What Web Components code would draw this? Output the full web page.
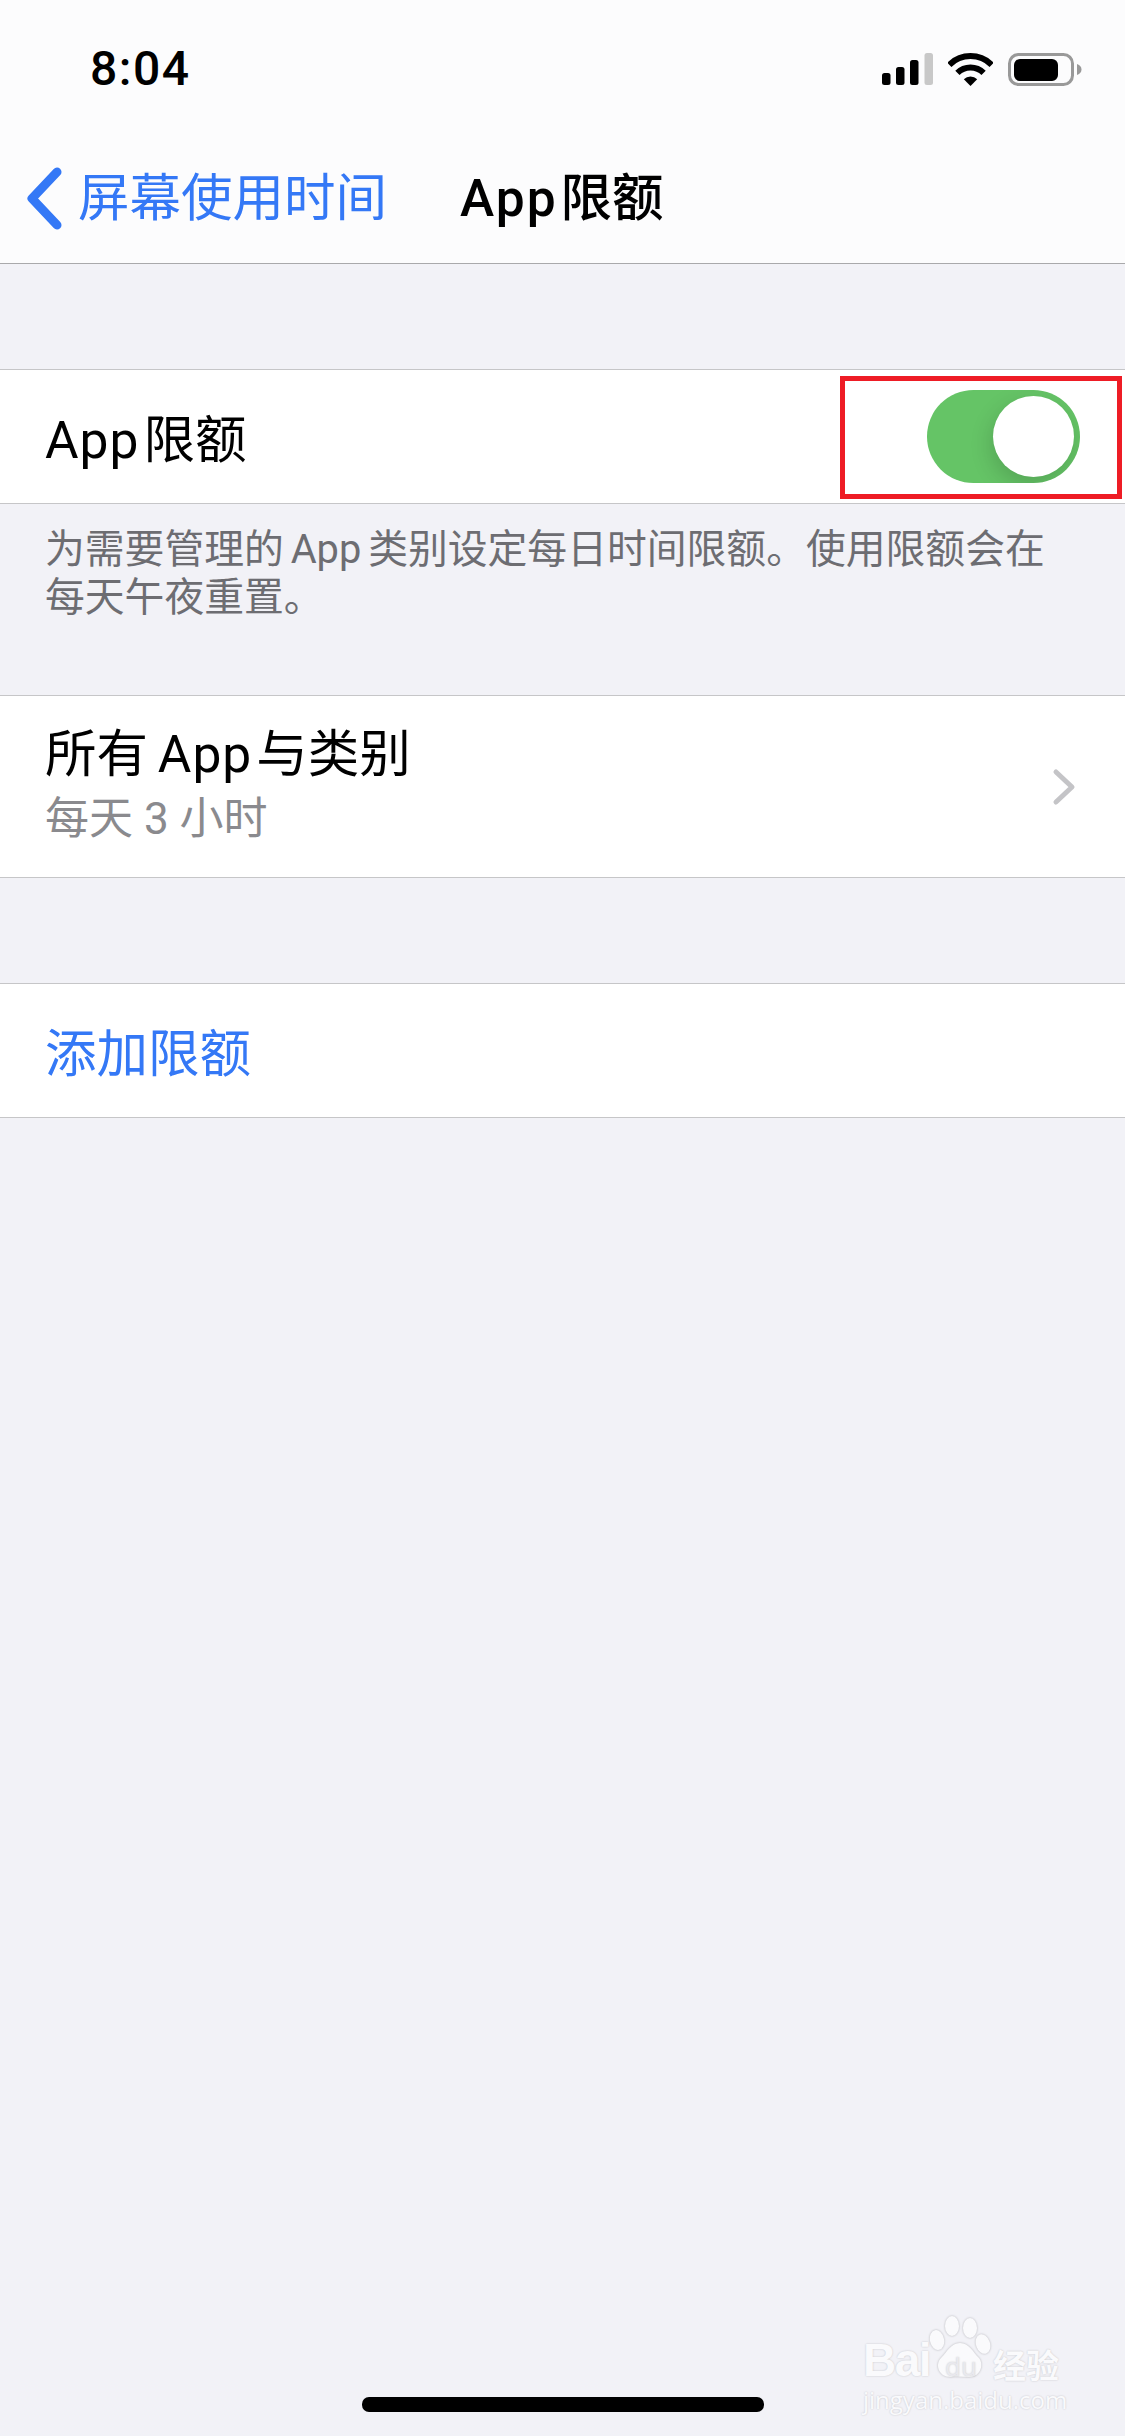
<!DOCTYPE html>
<html lang="zh">
<head>
<meta charset="utf-8">
<title>App限额</title>
<style>
  html, body { margin: 0; padding: 0; }
  body {
    background: #f2f2f7;
    font-family: Roboto, "Noto Sans CJK SC", sans-serif;
  }
  .latin { letter-spacing: 1px; margin-right: 4px; }
</style>
</head>
<body>
<app-screen>
  <nav-header back="屏幕使用时间" time="8:04"></nav-header>
  <settings-group style="margin-top:105px">
    <settings-row marked>
      <span class="latin">App</span>限额
      <toggle-switch slot="end"></toggle-switch>
    </settings-row>
  </settings-group>
  <footer-note>为需要管理的 App 类别设定每日时间限额。使用限额会在每天午夜重置。</footer-note>
  <settings-group>
    <settings-row tall sub="每天 3 小时" chevron>所有 <span class="latin">App</span>与类别</settings-row>
  </settings-group>
  <settings-group style="margin-top:105px">
    <settings-row link>添加限额</settings-row>
  </settings-group>
  <home-indicator></home-indicator>
  <baidu-mark></baidu-mark>
</app-screen>

<script>
const define = (name, css, html) => {
  customElements.define(name, class extends HTMLElement {
    constructor() {
      super();
      this.attachShadow({ mode: 'open' });
    }
    connectedCallback() {
      const body = typeof html === 'function' ? html(this) : html;
      this.shadowRoot.innerHTML = `<style>${css}</style>${body}`;
    }
  });
};

define('app-screen', `
  :host { display: flex; flex-direction: column; position: relative; width: 1125px; height: 2436px; overflow: hidden; background: #f2f2f7; }
`, `<slot></slot>`);

define('nav-header', `
  :host { display: block; background: #fcfcfd; border-bottom: 1px solid #a9a9ab; color: #000; }
  .status { height: 138px; box-sizing: border-box; padding: 0 43px 0 90px; display: flex; align-items: center; justify-content: space-between; }
  .time { font: 500 48px/1 Roboto, sans-serif; letter-spacing: 1.5px; }
  .icons { display: flex; align-items: center; gap: 15px; }
  svg { display: block; }
  .nav { height: 125px; box-sizing: border-box; padding: 0 0 4px 27px; display: flex; align-items: center; gap: 73px; }
  .back { display: flex; align-items: center; gap: 16px; color: #3478f6; font-size: 51.5px; line-height: 60px; white-space: nowrap; }
  .title { font-size: 51.5px; line-height: 60px; font-weight: 500; white-space: nowrap; }
  .title span { letter-spacing: 2px; margin-right: 3px; }
`, el => `
  <div class="status">
    <span class="time">${el.getAttribute('time')}</span>
    <div class="icons">
      <svg width="51" height="32" viewBox="0 0 51 32">
        <rect x="0" y="20" width="8.5" height="12" rx="2.5"/>
        <rect x="14" y="14" width="8.5" height="18" rx="2.5"/>
        <rect x="28" y="7" width="8.5" height="25" rx="2.5"/>
        <rect x="42.5" y="0" width="8.5" height="32" rx="2.5" fill="#c8c8c8"/>
      </svg>
      <svg width="45" height="33" viewBox="0 0 45 33" fill="none" stroke="#000" stroke-width="6">
        <path d="M1.3 11.8A30 30 0 0 1 43.7 11.8"/>
        <path d="M9.4 19.9A18.5 18.5 0 0 1 35.6 19.9"/>
        <path d="M22.5 33L15.8 26.3A9.5 9.5 0 0 1 29.2 26.3Z" fill="#000" stroke="none"/>
      </svg>
      <svg width="74" height="33" viewBox="0 0 74 33">
        <rect x="1.5" y="1.5" width="63" height="30" rx="9" fill="none" stroke="#999" stroke-width="3"/>
        <rect x="6" y="6" width="44" height="22" rx="6"/>
        <path d="M69 11C72 12 73.5 14 73.5 16.5S72 21 69 22Z" fill="#999"/>
      </svg>
    </div>
  </div>
  <div class="nav">
    <div class="back">
      <svg width="35" height="63" viewBox="0 0 35 63" fill="none" stroke="#3478f6" stroke-width="9" stroke-linecap="round" stroke-linejoin="round">
        <path d="M30 5L5 31.5L30 58"/>
      </svg>
      <span>${el.getAttribute('back')}</span>
    </div>
    <div class="title"><span>App</span>限额</div>
  </div>
`);

define('settings-group', `
  :host { display: block; background: #fff; border-top: 1px solid #c6c6c8; border-bottom: 1px solid #c6c6c8; }
`, `<slot></slot>`);

define('settings-row', `
  :host { display: flex; align-items: center; justify-content: space-between; position: relative; box-sizing: border-box; height: 133px; padding: 0 45px; font-size: 51.5px; color: #000; }
  :host([tall]) { height: 181px; padding-right: 49px; }
  :host([link]) { color: #3478f6; }
  .text { display: flex; flex-direction: column; gap: 8px; padding-top: 8px; white-space: nowrap; }
  :host([tall]) .text { padding: 0 0 4px; }
  :host([tall]) .main { word-spacing: -3px; }
  .main { line-height: 60px; }
  .sub { font-size: 44px; line-height: 52px; color: #8a8a8e; }
  .mark { position: absolute; left: 840px; top: 6px; width: 282px; height: 123px; box-sizing: border-box; border: 5px solid #ee1c25; pointer-events: none; }
  svg { display: block; }
`, el => `
  <div class="text">
    <div class="main"><slot></slot></div>
    ${el.hasAttribute('sub') ? `<div class="sub">${el.getAttribute('sub')}</div>` : ''}
  </div>
  <slot name="end"></slot>
  ${el.hasAttribute('chevron') ? `<svg width="24" height="38" viewBox="0 0 24 38" fill="none" stroke="#c4c4c7" stroke-width="5" stroke-linecap="round" stroke-linejoin="round"><path d="M4 4L20 19L4 34"/></svg>` : ''}
  ${el.hasAttribute('marked') ? `<div class="mark"></div>` : ''}
`);

define('toggle-switch', `
  :host { display: block; position: relative; width: 153px; height: 93px; border-radius: 47px; background: #65c466; overflow: hidden; }
  .thumb { position: absolute; right: 6px; top: 6px; width: 81px; height: 81px; border-radius: 50%; background: #fff; box-shadow: -2px 8px 22px rgba(0,0,0,.16); }
`, `<div class="thumb"></div>`);

define('footer-note', `
  :host { display: block; box-sizing: border-box; height: 191px; padding: 22px 60px 0 45px; font-size: 39.8px; line-height: 48px; word-spacing: -3px; color: #6d6d72; }
`, `<slot></slot>`);

define('home-indicator', `
  :host { display: block; position: absolute; left: 362px; top: 2397px; width: 402px; height: 15px; border-radius: 7px; background: #000; }
`, ``);

define('baidu-mark', `
  :host { display: block; position: absolute; left: 863px; top: 2316px; width: 202px; height: 98px; color: #fafafc; }
  .line { position: absolute; white-space: nowrap; text-shadow: 0 0 2px rgba(0,0,0,.2); }
  .bai { left: 0; top: 26px; font: 700 46px/36px "Liberation Sans", sans-serif; letter-spacing: -1.5px; }
  .jing { left: 130px; top: 30px; font: 700 33px/36px "Noto Sans CJK SC", sans-serif; }
  .url { left: 0; top: 68px; font: 400 24px/32px "Open Sans", sans-serif; }
  svg { position: absolute; left: 66px; top: 0; filter: drop-shadow(0 0 1px rgba(0,0,0,.25)); }
  .du { left: 82px; top: 38px; font: 400 26px/24px "Open Sans", sans-serif; color: #e9e9ee; }
`, `
  <svg width="62" height="62" viewBox="0 0 62 62" fill="#fafafc">
    <ellipse cx="8" cy="24" rx="7" ry="10" transform="rotate(-12 8 24)"/>
    <ellipse cx="23" cy="10" rx="7" ry="10"/>
    <ellipse cx="41" cy="12" rx="7" ry="10"/>
    <ellipse cx="54" cy="28" rx="7" ry="10" transform="rotate(-18 54 28)"/>
    <path d="M31 27C40 27 44 36 50 42C55 48 52 61 40 61C34 61 28 60 22 61C9 61 6 48 12 42C18 36 22 27 31 27Z"/>
  </svg>
  <span class="line bai">Bai</span>
  <span class="line du">du</span>
  <span class="line jing">经验</span>
  <span class="line url">jingyan.baidu.com</span>
`);
</script>
</body>
</html>
